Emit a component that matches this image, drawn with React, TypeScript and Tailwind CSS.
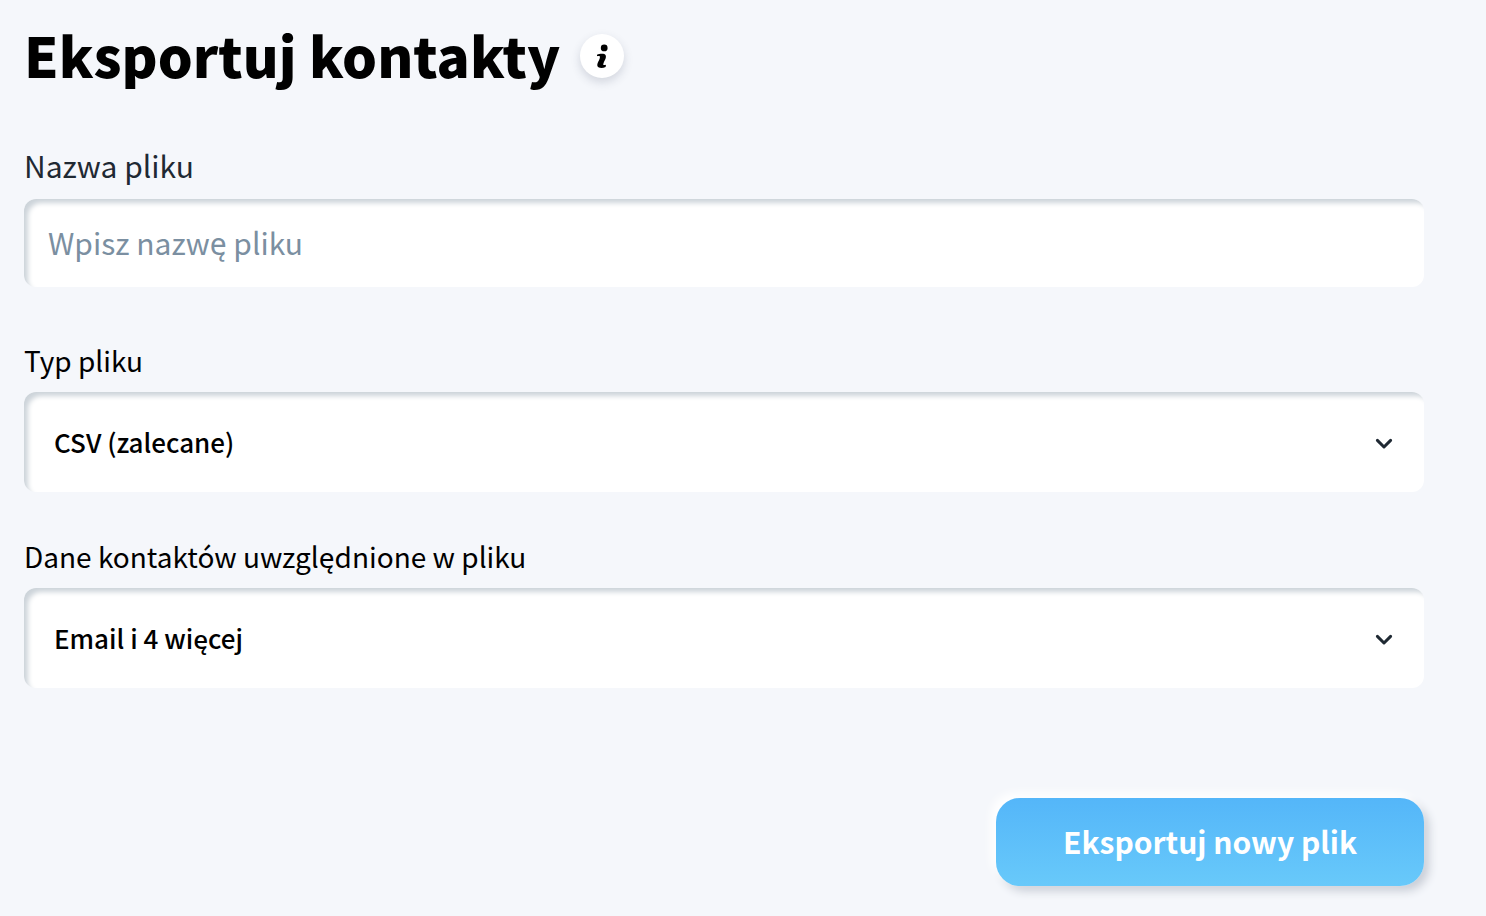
import type { ReactNode } from "react";

const insetPanel =
  "w-full rounded-xl border-0 bg-white shadow-[inset_5px_5px_5px_-1px_#cdd4da] outline-none";

function InfoButton() {
  return (
    <button
      type="button"
      aria-label="Informacje"
      className="flex size-11 items-center justify-center rounded-full bg-white text-black shadow-[0_4px_10px_rgba(50,60,90,0.18)]"
    >
      <svg viewBox="0 0 44 44" className="size-11" fill="currentColor" aria-hidden="true">
        <ellipse cx="24.2" cy="13.9" rx="3.4" ry="3.4" />
        <path d="M17 20.8C19.2 19.7 22 19.8 24.3 20C26 20.6 26.3 22.4 25.6 24.4C24.9 26.4 23.3 28.6 23.2 30.7C23.8 31.3 24.9 31.1 26 30.8L25.6 33C23.6 34 20.8 34.3 18.9 33.6C17 32.8 17 30.9 17.7 29.1C18.4 27.2 20.1 25 20 22.6C19.1 22 17.9 22 17 22.2Z" />
      </svg>
    </button>
  );
}

function SelectField({ id, label, children }: { id: string; label: string; children: ReactNode }) {
  return (
    <div className="flex flex-col gap-[14px]">
      <label htmlFor={id} className="text-[28px] leading-9 text-black">
        {label}
      </label>
      <div className="grid items-center">
        <select
          id={id}
          className={`${insetPanel} col-start-1 row-start-1 h-25 appearance-none px-[30px] pb-0.5 text-[26px] font-medium text-black`}
        >
          {children}
        </select>
        <svg
          viewBox="0 0 20 20"
          className="pointer-events-none col-start-1 row-start-1 mr-[30px] size-5 justify-self-end"
          fill="none"
          stroke="#1f2933"
          strokeWidth="3"
          strokeLinecap="round"
          strokeLinejoin="round"
          aria-hidden="true"
        >
          <path d="M3.4 8.4L10 15L16.6 8.4" />
        </svg>
      </div>
    </div>
  );
}

export default function App() {
  return (
    <main className="min-h-screen bg-[#f5f7fb] pt-6 pr-[62px] pb-[30px] pl-6 font-['Noto_Sans_CJK_SC','Noto_Sans',sans-serif]">
      <header className="flex items-center gap-5">
        <h1 className="pb-1 text-[55px] leading-15 font-black text-black">Eksportuj kontakty</h1>
        <InfoButton />
      </header>

      <form className="mt-[57px] flex flex-col" onSubmit={(event) => event.preventDefault()}>
        <div className="mb-[55px] flex flex-col gap-[14px]">
          <label htmlFor="file-name" className="text-[30px] leading-10 text-[#1f2933]">
            Nazwa pliku
          </label>
          <input
            id="file-name"
            type="text"
            placeholder="Wpisz nazwę pliku"
            className={`${insetPanel} h-22 px-6 pb-0.5 text-[30px] text-[#1f2933] placeholder:text-[#7b8fa1]`}
          />
        </div>

        <div className="flex flex-col gap-[46px]">
          <SelectField id="file-type" label="Typ pliku">
            <option>CSV (zalecane)</option>
          </SelectField>
          <SelectField id="contact-data" label="Dane kontaktów uwzględnione w pliku">
            <option>Email i 4 więcej</option>
          </SelectField>
        </div>

        <button
          type="submit"
          className="mt-[110px] h-22 w-[428px] self-end rounded-3xl bg-linear-to-b from-[#54b6f9] to-[#68c9fa] pb-0.5 text-[30px] font-bold text-white shadow-[-5px_-5px_10px_#ffffff,5px_5px_10px_#c8cdd6]"
        >
          Eksportuj nowy plik
        </button>
      </form>
    </main>
  );
}
